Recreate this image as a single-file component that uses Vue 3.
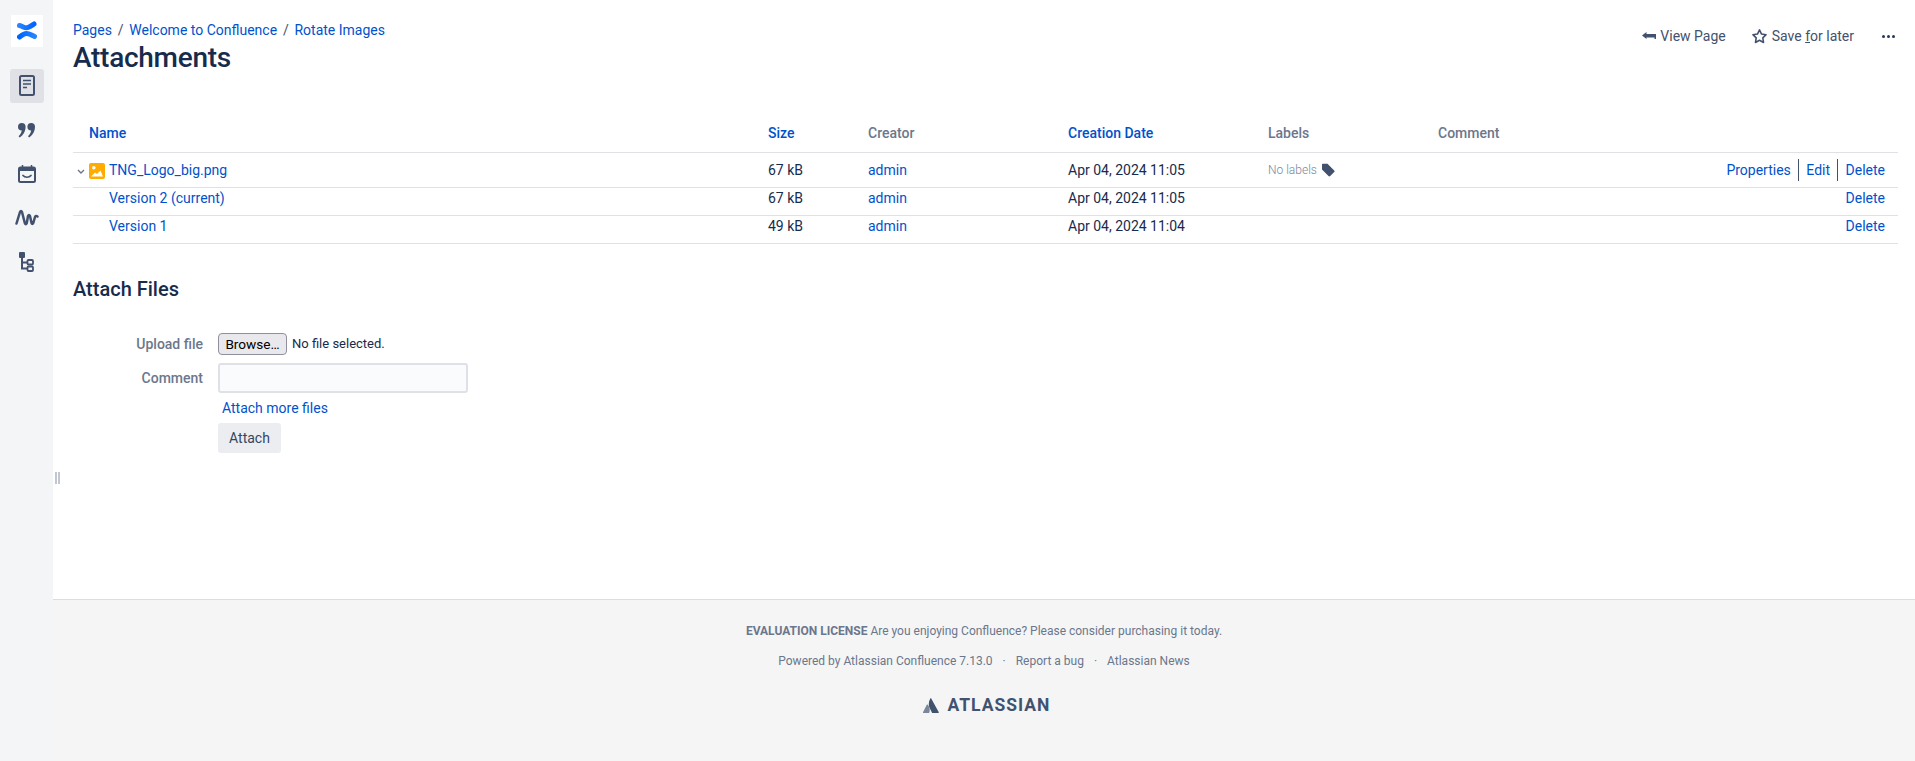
<script setup>
const columns = [
  { label: 'Name', link: true },
  { label: 'Size', link: true },
  { label: 'Creator', link: false },
  { label: 'Creation Date', link: true },
  { label: 'Labels', link: false },
  { label: 'Comment', link: false },
  { label: '', link: false },
]

const rows = [
  { name: 'TNG_Logo_big.png', size: '67 kB', date: 'Apr 04, 2024 11:05', main: true },
  { name: 'Version 2 (current)', size: '67 kB', date: 'Apr 04, 2024 11:05', main: false },
  { name: 'Version 1', size: '49 kB', date: 'Apr 04, 2024 11:04', main: false },
]
</script>

<template>
  <div class="page">
    <!-- left rail -->
    <aside class="rail">
      <a class="logo">
        <svg width="20" height="20" viewBox="0 0 20 20" fill="none">
          <defs>
            <linearGradient id="cfa" x1="0" y1="0" x2="1" y2="0">
              <stop offset="0" stop-color="#2684FF" />
              <stop offset="1" stop-color="#0065FF" />
            </linearGradient>
            <linearGradient id="cfb" x1="0" y1="0" x2="1" y2="0">
              <stop offset="0" stop-color="#0065FF" />
              <stop offset="1" stop-color="#2684FF" />
            </linearGradient>
          </defs>
          <path d="M2.500 4.500C5.500 5 8 7.800 11 6.500 14 5.300 15.500 4 17 3" stroke="url(#cfa)" stroke-width="5" stroke-linecap="round" />
          <path d="M2.500 16c2.500-2 5-3.800 7.500-3.500 3 .2 5 1.800 7.500 3" stroke="url(#cfb)" stroke-width="5" stroke-linecap="round" />
        </svg>
      </a>
      <nav class="rail-nav">
        <a class="rail-item active">
          <svg width="16" height="22" viewBox="0 0 16 22" fill="none">
            <rect x="1" y="1" width="14" height="19" rx="1.500" stroke="#42526E" stroke-width="2" />
            <path d="M4 5.500h8M4 9h8M4 12.500h4" stroke="#42526E" stroke-width="1.500" />
          </svg>
        </a>
        <a class="rail-item">
          <svg width="18" height="15" viewBox="0 0 18 15" fill="#42526E">
            <path d="M3.800 0a3.800 3.800 0 0 1 3.800 3.800c0 4.500-2.400 8.500-5.800 10.700L.6 13.200c1.600-1.300 2.700-3 3.200-5.600A3.800 3.800 0 1 1 3.800 0z" />
            <path d="M13.200 0a3.800 3.800 0 0 1 3.800 3.800c0 4.500-2.400 8.500-5.800 10.700L10 13.200c1.600-1.300 2.700-3 3.200-5.600A3.800 3.800 0 1 1 13.200 0z" />
          </svg>
        </a>
        <a class="rail-item">
          <svg width="18" height="18" viewBox="0 0 18 18" fill="none">
            <rect x="1" y="2.500" width="16" height="14.500" rx="1.500" stroke="#42526E" stroke-width="2" />
            <path d="M1 4.500h16" stroke="#42526E" stroke-width="3" />
            <path d="M4.500 0v3M13.500 0v3" stroke="#42526E" stroke-width="1.500" />
            <path d="M5 10.500c2 2.300 6 2.300 8 0" stroke="#42526E" stroke-width="1.700" stroke-linecap="round" />
          </svg>
        </a>
        <a class="rail-item">
          <svg width="24" height="18" viewBox="0 0 24 18" fill="none">
            <path d="M1.500 14.500 5 3Q6 .8 7 3l2.800 11q1 2.500 2 0L13 7q1-2.200 2 0l1.500 7q.8 2 1.800 0L20 8q.8-1.600 2.500-.5" stroke="#42526E" stroke-width="2.500" stroke-linecap="round" stroke-linejoin="round" />
          </svg>
        </a>
        <a class="rail-item">
          <svg width="15" height="20" viewBox="0 0 15 20" fill="none">
            <rect x="0" y="0" width="6" height="6" rx="1" fill="#42526E" />
            <path d="M3 5v11.500h5M3 10.500h5" stroke="#42526E" stroke-width="2" />
            <rect x="8.500" y="8" width="5.500" height="4.500" rx="1" stroke="#42526E" stroke-width="1.800" />
            <rect x="8.500" y="14.500" width="5.500" height="4.500" rx="1" stroke="#42526E" stroke-width="1.800" />
          </svg>
        </a>
      </nav>
    </aside>

    <div class="column">
      <main class="content">
        <span class="grip"></span>

        <header class="head">
          <div>
            <ol class="crumbs">
              <li><a>Pages</a></li>
              <li class="sep">/</li>
              <li><a>Welcome to Confluence</a></li>
              <li class="sep">/</li>
              <li><a>Rotate Images</a></li>
            </ol>
            <h1>Attachments</h1>
          </div>
          <div class="actions">
            <a class="action view">
              <svg width="14" height="10" viewBox="0 0 14 10" fill="#42526E">
                <path d="M0 4.500 4.500 1v2h9.500v5h-1.500V6.500H4.500V8z" />
              </svg>
              View Page
            </a>
            <a class="action save">
              <svg width="17" height="17" viewBox="0 0 16 16" fill="none">
                <path d="m8 1.800 1.900 3.900 4.300.6-3.100 3 .7 4.300L8 11.600l-3.800 2 .7-4.300-3.100-3 4.300-.6z" stroke="#42526E" stroke-width="1.500" stroke-linejoin="round" />
              </svg>
              <span>Save <u>f</u>or later</span>
            </a>
            <a class="action more">
              <i></i><i></i><i></i>
            </a>
          </div>
        </header>

        <table class="files">
          <colgroup>
            <col class="c-name" />
            <col class="c-size" />
            <col class="c-creator" />
            <col class="c-date" />
            <col class="c-labels" />
            <col class="c-comment" />
            <col />
          </colgroup>
          <thead>
            <tr>
              <th v-for="col in columns" :key="col.label" :class="{ sortable: col.link }">{{ col.label }}</th>
            </tr>
          </thead>
          <tbody>
            <tr v-for="row in rows" :key="row.name" :class="{ main: row.main }">
              <td class="name">
                <svg v-if="row.main" class="chevron" width="8" height="5" viewBox="0 0 8 5" fill="none">
                  <path d="m1 1 3 3 3-3" stroke="#6B778C" stroke-width="1.400" />
                </svg>
                <svg v-if="row.main" class="thumb" width="16" height="16" viewBox="0 0 16 16">
                  <rect width="16" height="16" rx="2" fill="#FFAB00" />
                  <circle cx="4.800" cy="4.800" r="1.800" fill="#fff" />
                  <path d="M2 13.500 6 9.500l2 1.500 3.500-3.500 2.500 6z" fill="#fff" />
                </svg>
                <a>{{ row.name }}</a>
              </td>
              <td>{{ row.size }}</td>
              <td><a>admin</a></td>
              <td>{{ row.date }}</td>
              <td>
                <div v-if="row.main" class="nolabels">
                  No labels
                  <svg width="14" height="14" viewBox="0 0 14 14" fill="#42526E">
                    <path d="M1 1.500A.8.800 0 0 1 1.800.7H6.500l6.700 6.700a1.200 1.200 0 0 1 0 1.700l-4 4a1.200 1.200 0 0 1-1.700 0L1 6.500z" />
                  </svg>
                </div>
              </td>
              <td></td>
              <td class="ops">
                <template v-if="row.main">
                  <a class="bar">Properties</a>
                  <a class="bar">Edit</a>
                </template>
                <a>Delete</a>
              </td>
            </tr>
          </tbody>
        </table>

        <h2>Attach Files</h2>

        <form class="upload" @submit.prevent>
          <label>Upload file</label>
          <div class="file-field">
            <button type="button" class="browse">Browse…</button>
            <span>No file selected.</span>
          </div>
          <label class="pushed">Comment</label>
          <input class="comment pushed" type="text" />
          <span></span>
          <a class="more-files">Attach more files</a>
          <span></span>
          <div><button type="submit" class="attach">Attach</button></div>
        </form>
      </main>

      <footer class="foot">
        <p class="license"><b>EVALUATION LICENSE</b> Are you enjoying Confluence? Please consider purchasing it today.</p>
        <ul class="foot-links">
          <li>Powered by Atlassian Confluence 7.13.0</li>
          <li>Report a bug</li>
          <li>Atlassian News</li>
        </ul>
        <div class="brand">
          <svg width="16" height="15" viewBox="0 0 16 15">
            <path d="M4.600 6.600c-.2-.3-.6-.3-.8.100L0 14.300c-.1.300.1.700.5.700h5.300c.2 0 .3-.1.400-.3 1.100-2.400.5-5.900-1.600-8.100z" fill="#7A869A" />
            <path d="M7.400.4C5.300 3.800 5.400 7.500 6.800 10.300l2.200 4.400c.1.200.3.300.4.300h5.900c.4 0 .6-.4.500-.7L8.200.4C8 0 7.600 0 7.400.4z" fill="#42526E" />
          </svg>
          <span>ATLASSIAN</span>
        </div>
      </footer>
    </div>
  </div>
</template>

<style>
body {
  margin: 0;
  background: #fff;
}
</style>

<style scoped>
.page {
  display: flex;
  height: 761px;
  overflow: hidden;
  font-family: Roboto, "Liberation Sans", sans-serif;
  font-size: 14px;
  line-height: 20px;
  color: #172B4D;
}

a {
  color: #0052CC;
  text-decoration: none;
}

/* rail */
.rail {
  width: 53px;
  flex: none;
  background: #F4F5F7;
  display: flex;
  flex-direction: column;
  align-items: center;
  padding-top: 15px;
  box-sizing: border-box;
}

.logo {
  width: 32px;
  height: 32px;
  background: #fff;
  display: flex;
  align-items: center;
  justify-content: center;
}

.rail-nav {
  margin-top: 22px;
  display: flex;
  flex-direction: column;
  gap: 10px;
}

.rail-item {
  width: 34px;
  height: 34px;
  border-radius: 3px;
  display: flex;
  align-items: center;
  justify-content: center;
}

.rail-item.active {
  background: #DFE1E6;
}

.column {
  flex: 1;
  min-width: 0;
  display: flex;
  flex-direction: column;
}

.content {
  flex: 1;
  position: relative;
  padding: 20px 17px 0 20px;
}

.grip {
  position: absolute;
  left: 2px;
  top: 472px;
  width: 2px;
  height: 12px;
  background: #C1C7D0;
  box-shadow: 3px 0 0 #C1C7D0;
}

/* header */
.head {
  display: flex;
  justify-content: space-between;
  align-items: flex-start;
}

.crumbs {
  list-style: none;
  margin: 0;
  padding: 0;
  display: flex;
  gap: 5.800px;
}

.sep {
  color: #42526E;
}

h1 {
  margin: 2px 0 0;
  font-size: 28px;
  line-height: 32px;
  font-weight: 500;
  letter-spacing: -0.28px;
}

.actions {
  display: flex;
  align-items: center;
  margin-top: 6px;
  padding-right: 3px;
}

.action {
  display: flex;
  align-items: center;
  gap: 4px;
  color: #42526E;
}

.save {
  margin-left: 25px;
}

.more {
  margin-left: 28px;
  gap: 2px;
}

.more i {
  width: 3px;
  height: 3px;
  border-radius: 50%;
  background: #253858;
}

/* table */
.files {
  width: 100%;
  margin-top: 41px;
  border-collapse: collapse;
  table-layout: fixed;
}

.c-name { width: 695px; }
.c-size { width: 100px; }
.c-creator { width: 200px; }
.c-date { width: 200px; }
.c-labels { width: 170px; }
.c-comment { width: 200px; }

th {
  padding: 8px 0 9px;
  text-align: left;
  font-weight: 500;
  color: #6B778C;
  border-bottom: 1px solid #DFE1E6;
}

th:first-child {
  padding-left: 16px;
}

th.sortable {
  color: #0052CC;
}

td {
  padding: 0 0 7px;
  vertical-align: top;
  border-bottom: 1px solid #DFE1E6;
}

tr.main td {
  padding-top: 7px;
}

td.name {
  padding-left: 36px;
  position: relative;
}

.chevron {
  position: absolute;
  left: 4px;
  top: 16px;
}

.thumb {
  position: absolute;
  left: 16px;
  top: 10px;
}

.nolabels {
  display: flex;
  height: 20px;
  align-items: center;
  gap: 4px;
  font-size: 12px;
  font-weight: 300;
  color: #7A869A;
}

td.ops {
  text-align: right;
  padding-right: 13px;
}

.bar {
  display: inline-block;
  padding: 1px 7px 1px 0;
  margin: -1px 7.500px -1px 0;
  border-right: 1px solid #42526E;
}

/* form */
h2 {
  margin: 33px 0 0;
  font-size: 20px;
  line-height: 24px;
  font-weight: 500;
}

.upload {
  display: grid;
  grid-template-columns: 130px 1fr;
  column-gap: 15px;
  row-gap: 5px;
  margin-top: 32px;
  align-items: center;
}

.upload label {
  text-align: right;
  font-weight: 500;
  color: #6B778C;
}

.pushed {
  margin-top: 3px;
}

.file-field {
  display: flex;
  align-items: center;
  gap: 5px;
  font-size: 13px;
}

.browse {
  width: 69px;
  height: 22px;
  padding: 0;
  border: 1px solid #8F8F9D;
  border-radius: 4px;
  background: #E9E9ED;
  color: #000;
  font: 13.600px Roboto, sans-serif;
}

.comment {
  width: 250px;
  height: 30px;
  box-sizing: border-box;
  background: #FAFBFC;
  border: 2px solid #DFE1E6;
  border-radius: 3px;
}

.more-files {
  margin-left: 4px;
}

.attach {
  width: 63px;
  height: 30px;
  padding: 0;
  border: 0;
  border-radius: 3px;
  background: rgba(9, 30, 66, 0.08);
  color: #344563;
  font: 14px Roboto, sans-serif;
}

/* footer */
.foot {
  height: 162px;
  box-sizing: border-box;
  flex: none;
  background: #F5F5F5;
  border-top: 1px solid #DDD;
  text-align: center;
  font-size: 12px;
  color: #6B778C;
  padding-top: 21px;
}

.license {
  margin: 0;
}

.license b {
  font-weight: 700;
}

.foot-links {
  list-style: none;
  margin: 10px 0 0;
  padding: 0;
  display: flex;
  justify-content: center;
}

.foot-links li + li::before {
  content: "·";
  margin: 0 10px;
}

.brand {
  margin-top: 24px;
  padding-left: 5px;
  display: flex;
  align-items: center;
  justify-content: center;
  gap: 9px;
  color: #42526E;
}

.brand span {
  font-size: 17.500px;
  font-weight: 700;
  letter-spacing: 1px;
}
</style>
